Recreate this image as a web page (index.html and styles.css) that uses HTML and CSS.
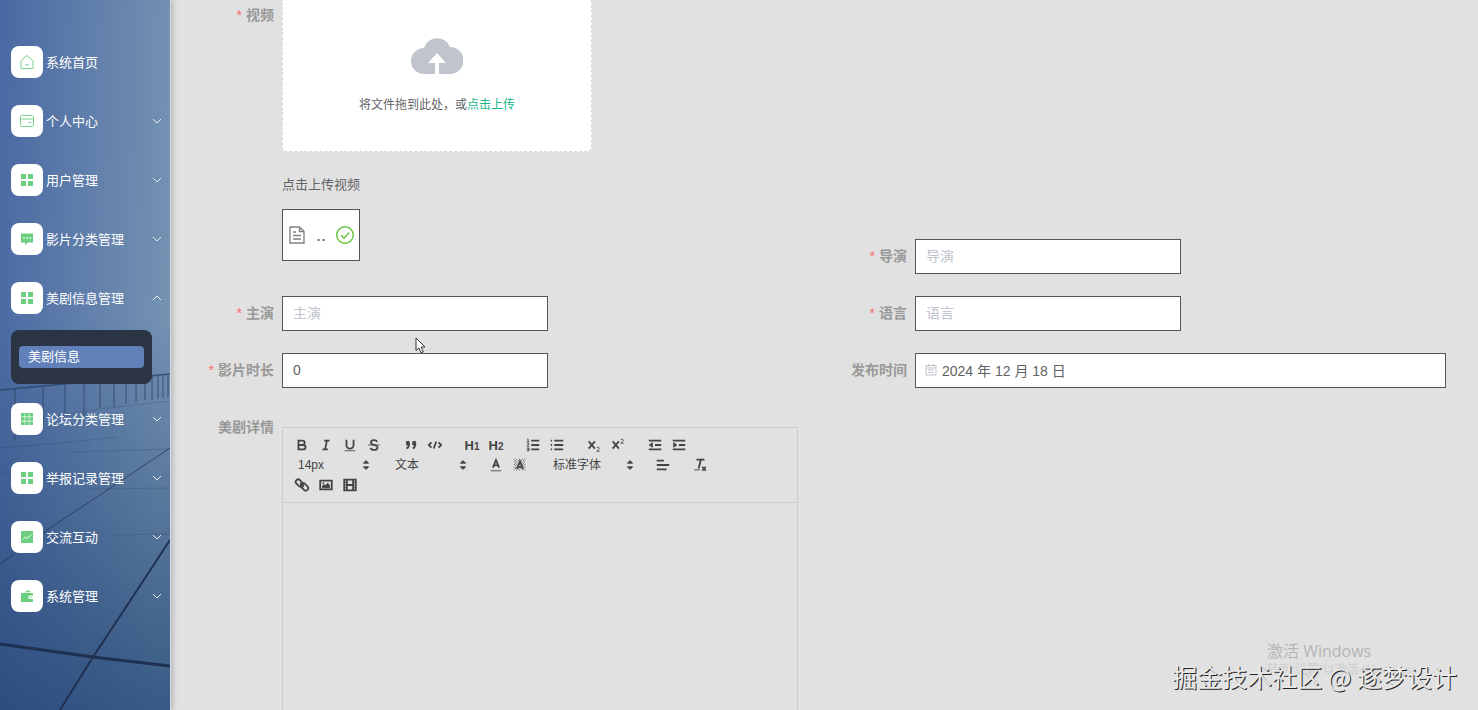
FILE: index.html
```html
<!DOCTYPE html>
<html lang="zh-CN">
<head>
  <meta charset="UTF-8">
  <meta name="viewport" content="width=device-width, initial-scale=1">
  <title>美剧信息</title>
  <link rel="stylesheet" href="styles.css">
</head>
<body>
  <aside class="sidebar">
    <svg class="sidebar-bg" viewBox="0 0 170 710" preserveAspectRatio="none" aria-hidden="true">
      <defs>
        <linearGradient id="sky" x1="0" y1="0" x2="1" y2="0.12">
          <stop offset="0" stop-color="#4a69a3"/>
          <stop offset="1" stop-color="#7391b1"/>
        </linearGradient>
        <linearGradient id="shade" x1="0" y1="0" x2="0" y2="1">
          <stop offset="0.45" stop-color="#1c3f6e" stop-opacity="0"/>
          <stop offset="1" stop-color="#1c3f6e" stop-opacity="0.68"/>
        </linearGradient>
      </defs>
      <rect width="170" height="710" fill="url(#sky)"/>
      <rect width="170" height="710" fill="url(#shade)"/>
      <!-- 栏杆 -->
      <g fill="none" stroke="#2c4466" opacity="0.8">
        <path d="M0 390L43 386L170 374" stroke-width="1.5"/>
        <path d="M15 388V441M43 386V426M65 384V413M84 382V416M100 381V408M114 380V407M126 379V404M136 378V402M145 377V400M152 376V400M158 375V399M163 375V398M168 374V397"/>
        <path d="M50 418L100 409L170 401M0 448L60 443L118 437M70 452L170 449M0 473L60 477M90 489L170 488M110 535L170 534" stroke-width="0.6" opacity="0.5"/>
      </g>
      <!-- 地面的缝 -->
      <g fill="none" stroke="#1f3050">
        <path d="M0 564L50 528L100 495L170 448" stroke-width="1" opacity="0.7"/>
        <path d="M60 710L93 657L130 601L170 540" stroke-width="2"/>
        <path d="M0 644L93 657L170 666" stroke-width="3"/>
      </g>
    </svg>
    <nav class="menu">
      <a class="menu-item" href="#home">
        <span class="menu-icon"><svg viewBox="0 0 16 16" class="line"><path d="M2 6.500L8 1.500l6 5V14.500H2zM6 10.500q2 1.200 4 0"/></svg></span>
        <span class="menu-text">系统首页</span>
      </a>
      <a class="menu-item" href="#center">
        <span class="menu-icon"><svg viewBox="0 0 16 16" class="line"><path d="M2.500 2.500h11q1 0 1 1v9q0 1-1 1h-11q-1 0-1-1v-9q0-1 1-1zM1.500 6h13M9.500 9.500h3"/></svg></span>
        <span class="menu-text">个人中心</span>
        <svg class="arrow" viewBox="0 0 10 10"><path d="M1 3l4 4 4-4"/></svg>
      </a>
      <a class="menu-item" href="#users">
        <span class="menu-icon"><svg viewBox="0 0 16 16"><path d="M2 2h5v5H2zM9 2h5v5H9zM2 9h5v5H2zM9 9h5v5H9z"/></svg></span>
        <span class="menu-text">用户管理</span>
        <svg class="arrow" viewBox="0 0 10 10"><path d="M1 3l4 4 4-4"/></svg>
      </a>
      <a class="menu-item" href="#types">
        <span class="menu-icon"><svg viewBox="0 0 16 16"><path fill-rule="evenodd" d="M2 2.500h12v9H9L6 14v-2.500H2zM4.200 6.300v1.400h1.400V6.300zM7.300 6.300v1.400h1.400V6.300zM10.400 6.300v1.400h1.400V6.300z"/></svg></span>
        <span class="menu-text">影片分类管理</span>
        <svg class="arrow" viewBox="0 0 10 10"><path d="M1 3l4 4 4-4"/></svg>
      </a>
      <a class="menu-item" href="#dramas">
        <span class="menu-icon"><svg viewBox="0 0 16 16"><path d="M2 2h5v5H2zM9 2h5v5H9zM2 9h5v5H2zM9 9h5v5H9z"/></svg></span>
        <span class="menu-text">美剧信息管理</span>
        <svg class="arrow" viewBox="0 0 10 10"><path d="M1 7l4-4 4 4"/></svg>
      </a>
      <div class="submenu">
        <a class="submenu-item" href="#drama">美剧信息</a>
      </div>
      <a class="menu-item" href="#forum">
        <span class="menu-icon"><svg viewBox="0 0 16 16"><path d="M2 2h3.600v3.600H2zM6.200 2h3.600v3.600H6.200zM10.400 2H14v3.600h-3.600zM2 6.200h3.600v3.600H2zM6.200 6.200h3.600v3.600H6.200zM10.400 6.200H14v3.600h-3.600zM2 10.400h3.600V14H2zM6.200 10.400h3.600V14H6.200zM10.400 10.400H14V14h-3.600z"/></svg></span>
        <span class="menu-text">论坛分类管理</span>
        <svg class="arrow" viewBox="0 0 10 10"><path d="M1 3l4 4 4-4"/></svg>
      </a>
      <a class="menu-item" href="#reports">
        <span class="menu-icon"><svg viewBox="0 0 16 16"><path d="M2 2h5v5H2zM9 2h5v5H9zM2 9h5v5H2zM9 9h5v5H9z"/></svg></span>
        <span class="menu-text">举报记录管理</span>
        <svg class="arrow" viewBox="0 0 10 10"><path d="M1 3l4 4 4-4"/></svg>
      </a>
      <a class="menu-item" href="#talk">
        <span class="menu-icon"><svg viewBox="0 0 16 16"><path d="M2 2h12v12H2z"/><path class="cut" d="M4 10.500l2.500-2.500 2 1.500L12 5.500"/></svg></span>
        <span class="menu-text">交流互动</span>
        <svg class="arrow" viewBox="0 0 10 10"><path d="M1 3l4 4 4-4"/></svg>
      </a>
      <a class="menu-item" href="#system">
        <span class="menu-icon"><svg viewBox="0 0 16 16"><path d="M2 5h12v2.500h-3a1.800 1.800 0 0 0 0 3.600h3V14H2zM5 4.300L10 2l1.200 2.300z"/><circle cx="11.500" cy="9.300" r="0.800"/></svg></span>
        <span class="menu-text">系统管理</span>
        <svg class="arrow" viewBox="0 0 10 10"><path d="M1 3l4 4 4-4"/></svg>
      </a>
    </nav>
  </aside>

  <main class="main">
    <form class="form">
      <div class="form-item video-item">
        <label class="label required" for="video">视频</label>
        <div class="content">
          <label class="upload" for="video">
            <svg class="cloud" viewBox="0 0 52 38" aria-hidden="true">
              <path fill="#c0c4cc" d="M13 38A13 13 0 0 1 13 12a13.500 12.500 0 0 1 26-1 13.500 13.500 0 0 1 0 27H28V27h7L26 17l-9 10h7v11z"/>
            </svg>
            <span class="upload-text">将文件拖到此处，或<em>点击上传</em></span>
            <input class="upload-file" type="file" id="video">
          </label>
          <p class="tip">点击上传视频</p>
          <div class="file">
            <svg class="file-icon" viewBox="0 0 18 18"><path d="M2 1h9.500L16 5.500V17H2zM11.500 1v4.500H16M5 6h3M5 9.500h8M5 13h8"/></svg>
            <span class="file-name">..</span>
            <svg class="file-ok" viewBox="0 0 18 18"><circle cx="9" cy="9" r="8.300"/><path d="M5 9.200l3 3L13.200 6.500"/></svg>
          </div>
        </div>
      </div>
      <div class="form-item director-item">
        <label class="label required" for="director">导演</label>
        <div class="content"><input class="input half" type="text" id="director" placeholder="导演"></div>
      </div>
      <div class="form-item">
        <label class="label required" for="actor">主演</label>
        <div class="content"><input class="input half" type="text" id="actor" placeholder="主演"></div>
      </div>
      <div class="form-item">
        <label class="label required" for="language">语言</label>
        <div class="content"><input class="input half" type="text" id="language" placeholder="语言"></div>
      </div>
      <div class="form-item">
        <label class="label required" for="duration">影片时长</label>
        <div class="content"><input class="input half" type="text" id="duration" value="0"></div>
      </div>
      <div class="form-item">
        <label class="label" for="date">发布时间</label>
        <div class="content date">
          <svg class="date-icon" viewBox="0 0 12 12"><path d="M1 1.500h10v9.500H1zM1 4h10M3.500 0v2.500M8.500 0v2.500M3 6h6M3 8.500h6"/></svg>
          <input class="input" type="text" id="date" value="2024 年 12 月 18 日">
        </div>
      </div>
      <div class="form-item editor-item">
        <label class="label" for="detail">美剧详情</label>
        <div class="content">
          <div class="editor">
            <div class="toolbar">
              <div class="toolbar-row">
                <span class="formats">
                  <button type="button" aria-label="bold"><svg viewBox="0 0 18 18"><path d="M5 4h4.500a2.500 2.500 0 0 1 0 5H5zM5 9h5.500a2.500 2.500 0 0 1 0 5H5z"/></svg></button>
                  <button type="button" aria-label="italic"><svg viewBox="0 0 18 18"><path d="M7 4h6M5 14h6M8 14l2-10"/></svg></button>
                  <button type="button" aria-label="underline"><svg viewBox="0 0 18 18"><path d="M5 3v6a4 4 0 0 0 8 0V3"/><path class="thin" d="M3 15.500h12"/></svg></button>
                  <button type="button" aria-label="strike"><svg viewBox="0 0 18 18"><path class="thin" d="M2.500 9h13"/><path d="M12.500 5.500C12 4 10.500 3.500 9 3.500 7 3.500 5.500 4.500 5.500 6c0 4 7.500 2 7.500 6 0 1.500-1.500 2.500-4 2.500-2 0-3.500-.8-4-2.200"/></svg></button>
                </span>
                <span class="formats">
                  <button type="button" aria-label="blockquote"><svg viewBox="0 0 18 18"><path class="solid" d="M4 5h3v4H4zM11 5h3v4h-3z"/><path d="M7 7c0 4-1 5-3 6M14 7c0 4-1 5-3 6"/></svg></button>
                  <button type="button" aria-label="code"><svg viewBox="0 0 18 18"><path d="M5 6L2 9l3 3M13 6l3 3-3 3M10.500 5l-3 8"/></svg></button>
                </span>
                <span class="formats">
                  <button type="button" aria-label="header 1"><b>H</b><small>1</small></button>
                  <button type="button" aria-label="header 2"><b>H</b><small>2</small></button>
                </span>
                <span class="formats">
                  <button type="button" aria-label="ordered list"><svg viewBox="0 0 18 18"><path d="M7 4h9M7 9h9M7 14h9"/><path class="thin" d="M2.500 2.500h1v3M2 5.500h3M2 7.500h2.500L2.500 10.500H5M2 12.500h2.500v3H2M2.500 14h2"/></svg></button>
                  <button type="button" aria-label="bullet list"><svg viewBox="0 0 18 18"><path d="M6 4h10M6 9h10M6 14h10M2 4h1.500M2 9h1.500M2 14h1.500"/></svg></button>
                </span>
                <span class="formats">
                  <button type="button" aria-label="subscript"><svg viewBox="0 0 18 18"><path d="M3 5l7 8M10 5l-7 8"/><path class="thin" d="M12 12.500c.5-1.500 3-1.200 3 .2 0 1-2 2-3 3.300h3.500"/></svg></button>
                  <button type="button" aria-label="superscript"><svg viewBox="0 0 18 18"><path d="M3 5l7 8M10 5l-7 8"/><path class="thin" d="M12 3.500c.5-1.500 3-1.200 3 .2 0 1-2 2-3 3.300h3.500"/></svg></button>
                </span>
                <span class="formats">
                  <button type="button" aria-label="outdent"><svg viewBox="0 0 18 18"><path d="M2 4h14M9 9h7M2 14h14"/><path class="solid" d="M6 6.500v5L2.500 9z"/></svg></button>
                  <button type="button" aria-label="indent"><svg viewBox="0 0 18 18"><path d="M2 4h14M9 9h7M2 14h14"/><path class="solid" d="M3 6.500v5L6.500 9z"/></svg></button>
                </span>
              </div>
              <div class="toolbar-row">
                <span class="formats picker">
                  <select aria-label="字号"><option>14px</option></select>
                  <svg viewBox="0 0 18 18"><path class="solid" d="M6 7l3-3 3 3zM6 11l3 3 3-3z"/></svg>
                </span>
                <span class="formats picker">
                  <select aria-label="标题"><option>文本</option></select>
                  <svg viewBox="0 0 18 18"><path class="solid" d="M6 7l3-3 3 3zM6 11l3 3 3-3z"/></svg>
                </span>
                <span class="formats">
                  <button type="button" aria-label="color"><svg viewBox="0 0 18 18"><path class="thin" d="M3 15.500h12"/><path d="M5.500 12L9 3.500l3.500 8.500M6.500 9.500h5"/></svg></button>
                  <button type="button" aria-label="background"><svg viewBox="0 0 18 18"><path class="dots" d="M2 2.500h14M2 5.500h14M2 8.500h14M2 11.500h14M2 14.500h14"/><path class="dots" d="M3.500 4h12M3.500 7h12M3.500 10h12M3.500 13h12"/><path d="M5.500 13.500L9 5l3.500 8.500M6.500 11h5"/></svg></button>
                </span>
                <span class="formats picker wide">
                  <select aria-label="字体"><option>标准字体</option></select>
                  <svg viewBox="0 0 18 18"><path class="solid" d="M6 7l3-3 3 3zM6 11l3 3 3-3z"/></svg>
                </span>
                <span class="formats">
                  <button type="button" aria-label="align"><svg viewBox="0 0 18 18"><path d="M2 4h8M2 9h14M2 14h11"/></svg></button>
                </span>
                <span class="formats">
                  <button type="button" aria-label="clean"><svg viewBox="0 0 18 18"><path d="M5 3h9M10 3L7.500 13M11.500 11l4 4.500M15.500 11l-4 4.500"/><path class="thin" d="M2.500 14.500H9"/></svg></button>
                </span>
              </div>
              <div class="toolbar-row">
                <span class="formats">
                  <button type="button" aria-label="link"><svg viewBox="0 0 18 18"><rect x="1.500" y="4" width="9" height="5.500" rx="2.700" transform="rotate(45 6 6.700)"/><rect x="7.500" y="8.500" width="9" height="5.500" rx="2.700" transform="rotate(45 12 11.200)"/><path d="M7 7l4 4"/></svg></button>
                  <button type="button" aria-label="image"><svg viewBox="0 0 18 18"><path d="M2.500 4h13v10h-13z"/><path class="solid" d="M5 12V10l2-1.500 1.500 1L11 7l2 2.500V12z"/><circle class="solid" cx="6" cy="7" r="0.600"/></svg></button>
                  <button type="button" aria-label="video"><svg viewBox="0 0 18 18"><path d="M2.500 3h13v12h-13zM5.500 3v12M12.500 3v12M5.500 9h7"/><path class="thin" d="M2.500 6h3M2.500 9h3M2.500 12h3M12.500 6h3M12.500 9h3M12.500 12h3"/></svg></button>
                </span>
              </div>
            </div>
            <textarea class="editor-text" id="detail"></textarea>
          </div>
        </div>
      </div>
    </form>
  </main>

  <svg class="cursor" viewBox="0 0 11 17" aria-hidden="true"><path d="M1 1v12.500l3-2.500 2 4.800 2.300-1L6.200 10H10z"/></svg>
  <div class="activate">
    <div class="activate-title">激活 Windows</div>
    <div class="activate-sub">转到“设置”以激活 Windows。</div>
  </div>
  <div class="watermark">掘金技术社区 @ 逐梦设计</div>
</body>
</html>
```
FILE: styles.css
```css
* {
  box-sizing: border-box;
}

body {
  margin: 0;
  display: flex;
  position: relative;
  height: 100vh;
  overflow: hidden;
  background: #e1e1e1;
  color: #606266;
  font-family: "Liberation Sans", "Noto Sans CJK SC", sans-serif;
  font-size: 14px;
}

a {
  color: inherit;
  text-decoration: none;
}

button,
input,
select,
textarea {
  font-family: inherit;
}

/* 左侧菜单 */
.sidebar {
  position: relative;
  flex: none;
  width: 171px;
  padding-top: 32px;
  border-right: 1px solid #d8dce6;
  box-shadow: 1px 0 6px rgba(0, 0, 0, 0.25);
}

.sidebar-bg {
  position: absolute;
  top: 0;
  left: 0;
  width: 100%;
  height: 100%;
}

.menu {
  position: relative;
}

.menu-item {
  display: flex;
  align-items: center;
  gap: 3px;
  height: 59px;
  padding: 0 8px 0 11px;
  color: #fff;
  font-size: 13px;
}

.menu-icon {
  display: flex;
  align-items: center;
  justify-content: center;
  width: 32px;
  height: 32px;
  border-radius: 8px;
  background: #fff;
}

.menu-icon svg {
  width: 16px;
  height: 16px;
  fill: #6bcf7f;
}

.menu-icon .line {
  fill: none;
  stroke: #7fd391;
}

.menu-icon .cut {
  fill: none;
  stroke: #fff;
}

.menu-text {
  flex: 1;
}

.arrow {
  width: 10px;
  height: 10px;
  fill: none;
  stroke: #e4ecf5;
}

.submenu {
  margin: 3px 18px 5px 11px;
  padding: 16px 8px;
  border-radius: 8px;
  background: #2a3444;
}

.submenu-item {
  display: block;
  height: 22px;
  padding-left: 9px;
  border-radius: 4px;
  background: #6180b8;
  color: #fff;
  font-size: 13px;
  line-height: 22px;
}

/* 表单 */
.main {
  flex: 1;
  min-width: 0;
  padding: 0 32px 0 9px;
}

.form {
  display: grid;
  grid-template-columns: 1fr 1fr;
  grid-template-rows: auto auto auto 1fr;
  row-gap: 22px;
  height: 100%;
}

.form-item {
  display: flex;
  gap: 8px;
}

.label {
  flex: none;
  width: 94px;
  color: #999;
  font-weight: bold;
  line-height: 35px;
  text-align: right;
}

.required::before {
  content: "*";
  margin-right: 4px;
  color: #f56c6c;
  font-weight: normal;
}

.content {
  flex: 1;
  min-width: 0;
}

.input {
  display: block;
  width: 100%;
  height: 35px;
  padding: 0 10px 2px;
  border: 1px solid #555;
  border-radius: 0;
  background: #fff;
  color: #606266;
  font-size: 14px;
}

.input::placeholder {
  color: #c0c4cc;
}

.half {
  width: 50%;
}

.video-item {
  padding-bottom: 13px;
}

.video-item .label {
  line-height: 30px;
}

.director-item {
  align-self: end;
}

.video-item .upload {
  display: flex;
  flex-direction: column;
  align-items: center;
  width: 310px;
  height: 152px;
  padding-top: 36px;
  border: 1px dashed #d9d9d9;
  border-top: none;
  border-radius: 0 0 5px 5px;
  background: #fff;
  cursor: pointer;
}

.cloud {
  width: 52px;
  height: 38px;
}

.upload-text {
  margin-top: 21px;
  font-size: 12px;
  line-height: 20px;
}

.upload-text em {
  color: #20b58b;
  font-style: normal;
}

.upload-file {
  display: none;
}

.tip {
  margin: 23px 0 14px;
  font-size: 13px;
  line-height: 20px;
}

.file {
  display: flex;
  align-items: center;
  justify-content: space-between;
  width: 78px;
  height: 52px;
  padding: 0 5px;
  border: 1px solid #555;
  background: #fff;
}

.file svg {
  width: 18px;
  height: 18px;
  fill: none;
  stroke: #808388;
  stroke-width: 1.4;
}

.file .file-ok {
  stroke: #67c23a;
}

.file-name {
  font-size: 18px;
}

.date {
  position: relative;
}

.date .input {
  padding-left: 26px;
}

.date-icon {
  position: absolute;
  top: 11px;
  left: 10px;
  width: 12px;
  height: 12px;
  fill: none;
  stroke: #c0c4cc;
}

/* 富文本编辑器 */
.editor-item .content {
  padding: 17px 15px 0 0;
}

.editor {
  display: flex;
  flex-direction: column;
  height: 100%;
}

.toolbar {
  padding: 7px;
  border: 1px solid #ccc;
}

.toolbar-row {
  display: flex;
  gap: 13px;
  height: 20px;
}

.formats {
  display: flex;
}

.formats button {
  display: flex;
  align-items: center;
  justify-content: center;
  width: 24px;
  height: 20px;
  padding: 0;
  border: none;
  background: none;
  color: #444;
  font-size: 13px;
}

.formats small {
  padding-top: 2px;
  font-size: 10px;
  font-weight: bold;
}

.formats svg {
  width: 16px;
  height: 16px;
  fill: none;
  stroke: #444;
  stroke-width: 2;
}

.formats .thin {
  stroke-width: 1;
}

.formats .solid {
  fill: #444;
  stroke-width: 1;
}

.formats .dots {
  stroke-width: 1;
  stroke-dasharray: 1 2;
}

.picker {
  align-items: center;
  width: 84px;
}

.picker.wide {
  width: 93px;
}

.picker select {
  flex: 1;
  min-width: 0;
  height: 20px;
  padding: 0 0 0 8px;
  border: none;
  background: none;
  color: #444;
  font-size: 12px;
  appearance: none;
}

.editor-text {
  flex: 1;
  padding: 10px 12px;
  border: 1px solid #ccc;
  border-top: none;
  border-bottom: none;
  background: none;
  resize: none;
  outline: none;
}

/* 浮层 */
.cursor {
  position: absolute;
  top: 337px;
  left: 415px;
  width: 11px;
  height: 17px;
  fill: #fff;
  stroke: #333;
}

.activate {
  position: absolute;
  right: 60px;
  bottom: 31px;
  width: 151px;
  color: #b5b5b5;
  white-space: nowrap;
}

.activate-title {
  font-family: "Open Sans", "Noto Sans CJK SC", sans-serif;
  font-size: 16px;
  line-height: 20px;
}

.activate-sub {
  color: #cfcfcf;
  font-size: 12px;
  line-height: 18px;
}

.watermark {
  position: absolute;
  right: 21px;
  bottom: 16px;
  color: #e8e8e8;
  font-family: "Noto Sans CJK SC", sans-serif;
  font-size: 25px;
  line-height: 36px;
  text-shadow: 1px 1px 0 #222;
}
```
